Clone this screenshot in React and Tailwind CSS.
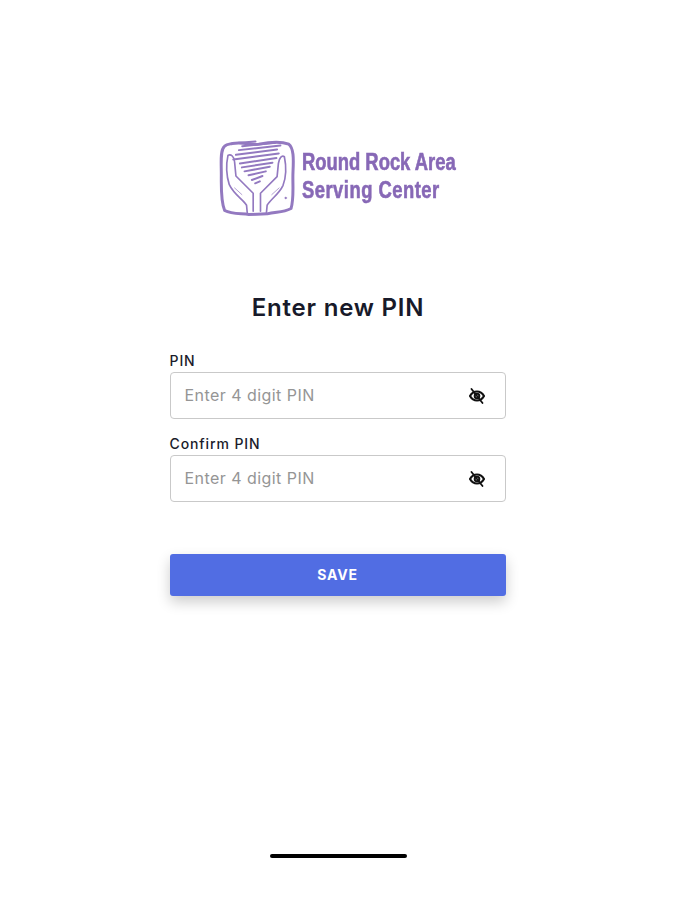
const inter = { fontFamily: "Inter, sans-serif" };

function LogoMark() {
    return (
        <svg viewBox="15 20 235 240" className="w-[78px] h-[80px] shrink-0" fill="none" stroke="#9379c0" strokeLinecap="round" strokeLinejoin="round">
            {/* outer frame */}
            <path d="M55 36 C90 30 110 42 135 38 C165 32 200 28 225 38 C240 50 240 80 238 120 C236 160 242 200 232 232 C205 246 185 240 160 248 L105 250 C85 246 55 250 32 238 C20 210 22 170 22 130 C22 95 18 55 32 44 C38 38 46 38 55 36 Z" strokeWidth="9" />
            {/* left hand */}
            <path d="M42 72 C50 66 62 76 62 92 L66 134 L118 186 L118 240 M42 72 C36 100 38 135 46 160 C60 190 88 205 98 222 L100 244" strokeWidth="5" />
            {/* right hand */}
            <path d="M212 76 C204 70 196 80 194 96 L190 136 L140 186 L140 240 M212 76 C218 105 216 140 208 162 C196 188 170 205 160 222 L158 244" strokeWidth="5" />
            <path d="M62 170 L84 190 M196 170 L174 190" strokeWidth="3" opacity="0.7" />
            {/* heart scribble */}
            <path d="M75 34 L125 30 M85 44 L185 34 M75 56 L200 42 M66 70 L190 54 M58 84 L195 66 M78 96 L188 80 M84 108 L176 94 M92 120 L168 106 M104 132 L156 120 M114 146 L146 134 M124 156 L138 150" strokeWidth="6" />
            <circle cx="216" cy="200" r="3" fill="#9379c0" strokeWidth="1" />
        </svg>
    );
}

function EyeOff() {
    return (
        <svg viewBox="0 0 16 16" className="w-4 h-4" fill="none" stroke="#111111" strokeLinecap="round">
            <path d="M1 8 C3 4.500 5.500 3.500 8 3.500 C10.500 3.500 13 4.500 15 8 C13 11.500 10.500 12.500 8 12.500 C5.500 12.500 3 11.500 1 8 Z" strokeWidth="2.200" />
            <circle cx="8" cy="8" r="2.300" strokeWidth="2" />
            <path d="M2.500 1 L13.500 15" strokeWidth="1.800" />
        </svg>
    );
}

function PinField({ label }) {
    return (
        <div>
            <div className="text-[14px] leading-4 font-medium text-[#1a1c2b] tracking-[0.9px]">{label}</div>
            <div className="mt-[3px] h-[47px] flex items-center justify-between rounded-[4px] border border-[#c9c9c9] bg-white pl-[14px] pr-5">
                <span className="-mt-[2px] text-[16px] text-[#959595] tracking-[0.45px]">Enter 4 digit PIN</span>
                <EyeOff />
            </div>
        </div>
    );
}

export default function App() {
    return (
        <div className="w-[675px] h-[900px] bg-white flex flex-col items-center pt-[138px]" style={inter}>
            <div className="flex items-center gap-[5px] w-[238px] blur-[0.5px]">
                <LogoMark />
                <div className="-mt-[5px] origin-left scale-x-[0.8] text-[23px] leading-[28px] font-bold text-[#8768b6] whitespace-nowrap [-webkit-text-stroke:0.6px_#8768b6]" style={{ fontFamily: '"Liberation Sans", sans-serif' }}>
                    <div>Round Rock Area</div>
                    <div className="tracking-[0.6px]">Serving Center</div>
                </div>
            </div>

            <h1 className="mt-[74px] ml-px text-[24px] leading-8 font-semibold text-[#181a2a] tracking-[0.8px]">Enter new PIN</h1>

            <div className="mt-[29px] w-[336px] flex flex-col gap-[17px]">
                <PinField label="PIN" />
                <PinField label="Confirm PIN" />
            </div>

            <button type="button" className="mt-[52px] w-[336px] h-[42px] pb-[2px] rounded-[3px] bg-[#516de3] text-white text-[14px] font-bold tracking-[0.8px] shadow-[0_6px_14px_rgba(0,0,0,0.2)]">
                SAVE
            </button>

            <div className="mt-[258px] ml-px w-[137px] h-1 rounded-full bg-black" />
        </div>
    );
}
